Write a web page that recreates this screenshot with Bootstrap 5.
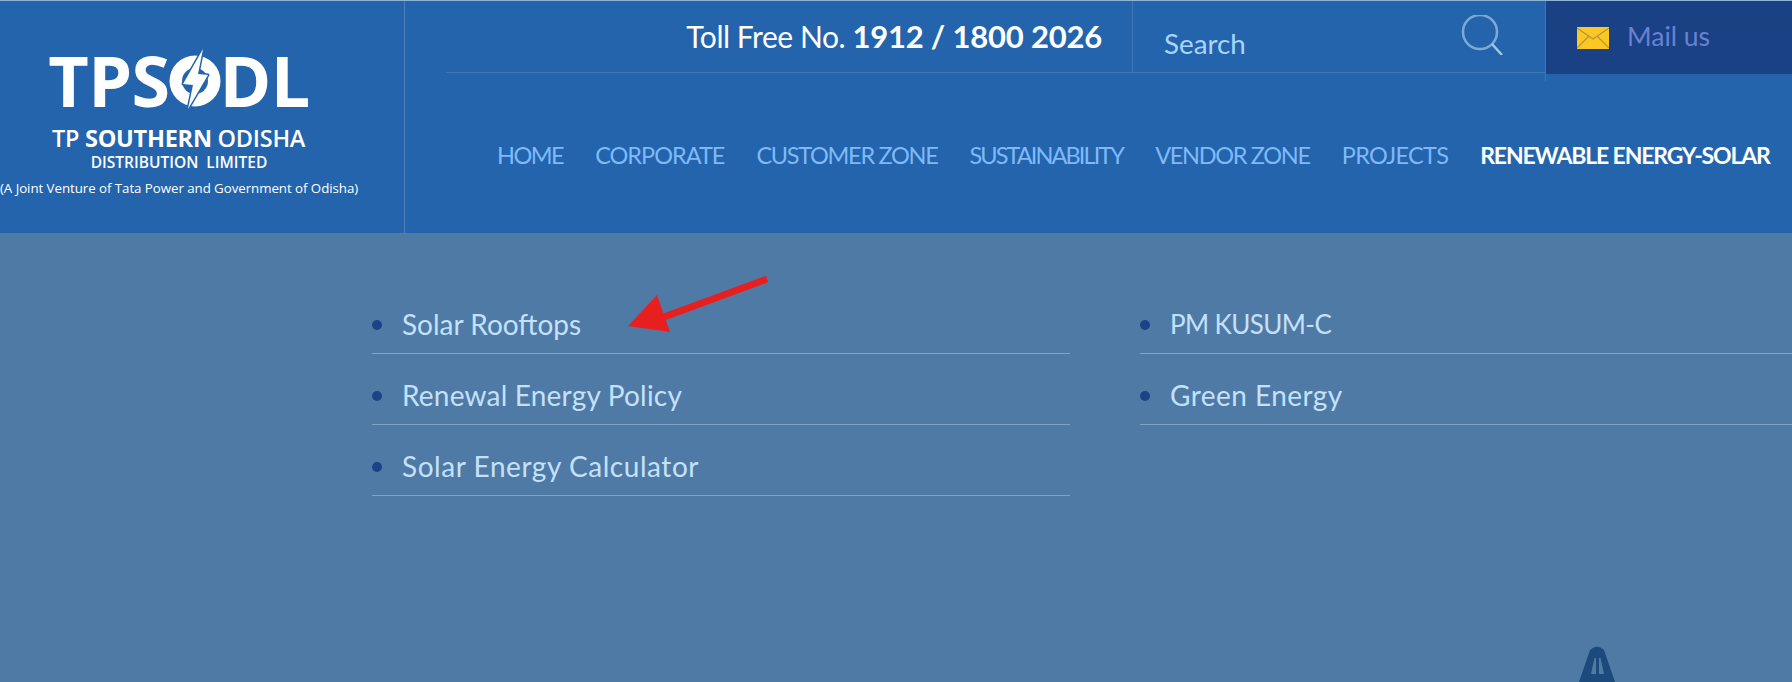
<!DOCTYPE html>
<html lang="en"><head><meta charset="utf-8"><title>TPSODL</title>
<link href="https://cdn.jsdelivr.net/npm/bootstrap@5.3.0/dist/css/bootstrap.min.css" rel="stylesheet">
<style>
html,body{height:100%}
body{background:#4f7aa6;font-family:Lato,"Liberation Sans",sans-serif;overflow:hidden;position:relative}
.site-head{height:234px;background:#2364ad;border-top:1px solid #8db4d6;border-bottom:1px solid #4a7fb8}
.brand-box{width:405px;flex:none;border-right:1px solid #4a80bc;padding-top:45px;color:#fff;font-family:"Open Sans",sans-serif;text-align:center;height:100%}
.brand-word{display:flex;justify-content:center;align-items:flex-start;height:64px;padding-right:46px;font-weight:700;font-size:70px;line-height:64px;letter-spacing:-.6px;margin-top:2px}
.brand-word svg{flex:none;margin:0 -1px}
.brand-l1{font-size:23.5px;font-weight:600;line-height:28px;margin-top:12px;padding-right:47px;white-space:nowrap;letter-spacing:-.25px}
.brand-l1 b{font-weight:700}
.brand-l2{font-size:15.5px;line-height:20px;padding-right:46px;font-weight:600;white-space:nowrap}
.brand-l3{font-size:13.3px;line-height:20px;margin-top:6px;padding-right:47px;white-space:nowrap;letter-spacing:-.05px}
.head-main{padding-left:41px;min-width:0}
.top-strip{height:72px}
.toll-box{border-bottom:1px solid #3f78ba;border-right:1px solid #3f78ba;color:#fff;font-size:30px;padding-right:30px;line-height:70px;white-space:nowrap;letter-spacing:-.45px}
.toll-box b{font-size:31px;font-weight:700;letter-spacing:-.2px}
.find-box{width:412px;border-bottom:1px solid #3f78ba;padding:0 42px 0 31px;color:#a9d4fb;font-size:27.8px;height:72px}
.find-text{padding-top:14px}
.find-box svg{margin-top:-4px}
.strip-sep{width:1px;height:80px;background:#3f78ba;flex:none}
.mail-box{width:246px;flex:none;height:73px;background:#1a4183;color:#6a80d4;font-size:26.5px;padding-left:31px;gap:18px}
.mail-box span{margin-top:-1px}
.main-nav{padding-left:51px;margin-top:61px;gap:32px;flex-wrap:nowrap}
.main-nav .nav-link{padding:0;color:#7fb9f8;font-size:23.5px;line-height:42px;letter-spacing:-1px;white-space:nowrap}
.main-nav .nav-link.fit-h{letter-spacing:-1.5px}
.main-nav .nav-link.fit-a{letter-spacing:-1.3px}
.main-nav .nav-link.fit-b{letter-spacing:-1.9px}
.main-nav .nav-link.fit-c{letter-spacing:-.7px}
.main-nav .nav-link.active{color:#fff;font-weight:700;letter-spacing:-1.15px;font-size:23px}
.menu-wrap{padding-left:372px;gap:70px;margin-top:49px}
.menu-col{width:698px;flex:none}
.menu-col.menu-rest{width:auto;flex:1 1 0;min-width:0}
.menu-col .list-group-item{background:transparent;color:#c4e1fa;border:0;border-bottom:1px solid #80a3c8;border-radius:0;padding:0 0 0 30px;height:71px;line-height:83px;font-size:28px;letter-spacing:.2px;position:relative}
.menu-col .list-group-item.fit-s{letter-spacing:0}
.menu-col .list-group-item.fit-w{letter-spacing:.55px}
.menu-col .list-group-item.fit-g{letter-spacing:.45px}
.menu-col .list-group-item.fit-k{font-size:26px;letter-spacing:-.6px}
.dot-mark{position:absolute;left:0;top:37px;width:10px;height:10px;border-radius:50%;background:#1c4386}
.arrow-over{position:absolute;left:620px;top:270px}
.tower-over{position:absolute;left:1579px;top:644px}
</style></head>
<body>
<header class="site-head d-flex">
  <div class="brand-box">
    <div class="brand-word"><span>TPS</span><svg width="52" height="64" viewBox="170 48 52 64" role="img" aria-label="O"><circle cx="196" cy="81" r="25.5" fill="#fff"/><circle cx="196" cy="81" r="13" fill="#2364ad"/><path d="M204 49 199 74 209 75 189 109 194 85 184 84Z" fill="#fff" stroke="#2364ad" stroke-width="3" paint-order="stroke" stroke-linejoin="round"/></svg><span>DL</span></div>
    <div class="brand-l1">TP <b>SOUTHERN</b> ODISHA</div>
    <div class="brand-l2">DISTRIBUTION&nbsp; LIMITED</div>
    <div class="brand-l3">(A Joint Venture of Tata Power and Government of Odisha)</div>
  </div>
  <div class="head-main flex-grow-1 d-flex flex-column">
    <div class="top-strip d-flex">
      <div class="toll-box flex-grow-1 text-end">Toll Free No. <b>1912 / 1800 2026</b></div>
      <div class="find-box d-flex justify-content-between align-items-center"><span class="find-text">Search</span>
        <svg width="42" height="40" viewBox="0 0 42 40" aria-hidden="true"><circle cx="19" cy="17" r="17" fill="none" stroke="#7fa9d2" stroke-width="2.5"/><path d="M31 29 41 40" stroke="#a4c6e4" stroke-width="2.5" fill="none"/></svg></div>
      <div class="strip-sep"></div>
      <div class="mail-box d-flex align-items-center">
        <svg width="32" height="22" viewBox="0 0 32 22" aria-hidden="true"><rect width="32" height="22" fill="#fcc722"/><path d="M0 1 16 12 32 1M0 21 12 9M32 21 20 9" stroke="#b0983a" stroke-width="1.2" fill="none"/></svg>
        <span>Mail us</span></div>
    </div>
    <ul class="nav main-nav">
      <li class="nav-item"><a class="nav-link fit-h" href="#">HOME</a></li>
      <li class="nav-item"><a class="nav-link" href="#">CORPORATE</a></li>
      <li class="nav-item"><a class="nav-link fit-a" href="#">CUSTOMER ZONE</a></li>
      <li class="nav-item"><a class="nav-link fit-b" href="#">SUSTAINABILITY</a></li>
      <li class="nav-item"><a class="nav-link fit-a" href="#">VENDOR ZONE</a></li>
      <li class="nav-item"><a class="nav-link fit-c" href="#">PROJECTS</a></li>
      <li class="nav-item"><a class="nav-link active" href="#">RENEWABLE ENERGY-SOLAR</a></li>
    </ul>
  </div>
</header>
<main class="menu-wrap d-flex">
  <ul class="list-group menu-col">
    <li class="list-group-item fit-s"><i class="dot-mark"></i>Solar Rooftops</li>
    <li class="list-group-item"><i class="dot-mark"></i>Renewal Energy Policy</li>
    <li class="list-group-item fit-w"><i class="dot-mark"></i>Solar Energy Calculator</li>
  </ul>
  <ul class="list-group menu-col menu-rest">
    <li class="list-group-item fit-k"><i class="dot-mark"></i>PM KUSUM-C</li>
    <li class="list-group-item fit-g"><i class="dot-mark"></i>Green Energy</li>
  </ul>
</main>
<svg class="arrow-over" width="155" height="70" viewBox="620 270 155 70" aria-hidden="true"><path d="M767 279 664 317" stroke="#e81f1f" stroke-width="7" fill="none"/><path d="M628 326 657 295 670 332Z" fill="#e81f1f"/></svg>
<svg class="tower-over" width="37" height="38" viewBox="0 0 37 38" aria-hidden="true"><path d="M0 38 11 6Q18 -1 25 6L36 38Z" fill="#1d4a7d"/><path d="M12 30 15.500 14 17 14 17 30ZM20 30 20 14 21.500 14 25 30Z" fill="#4f7aa6"/></svg>
</body></html>
